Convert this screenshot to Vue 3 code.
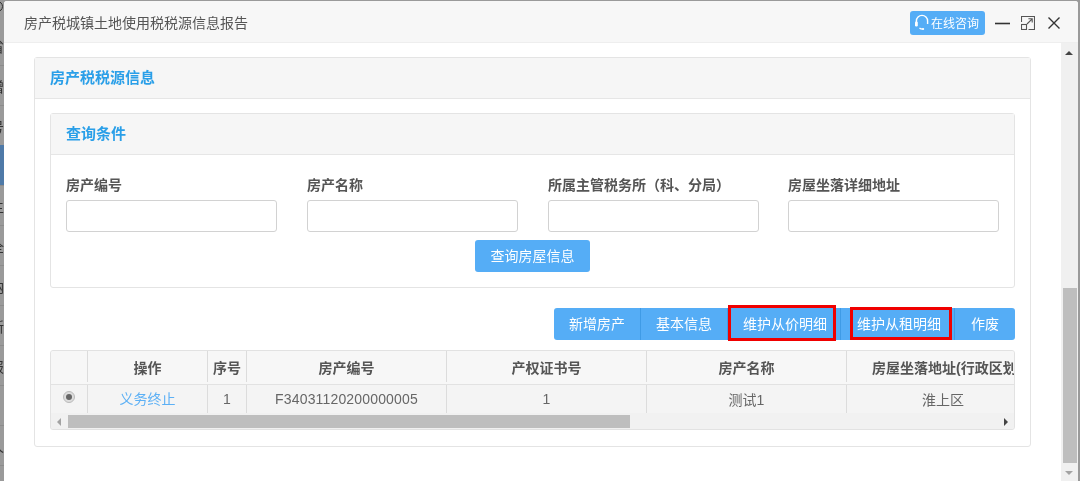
<script setup>
const sideRows = ['省', '增', '号', '', '主', '全', '纳', '新', '报', '', '人', '']
const fields = [
  { label: '房产编号' },
  { label: '房产名称' },
  { label: '所属主管税务所（科、分局）' },
  { label: '房屋坐落详细地址' },
]
const actions = [
  { text: '新增房产', cls: 'w86' },
  { text: '基本信息', cls: 'w86' },
  { text: '维护从价明细', cls: 'w113', mark: 'mark1' },
  { text: '维护从租明细', cls: 'w114', mark: 'mark2' },
  { text: '作废', cls: 'w60' },
]
const columns = [
  { head: '', cell: '', cls: 'c0' },
  { head: '操作', cell: '义务终止', cls: 'c1', link: true },
  { head: '序号', cell: '1', cls: 'c2' },
  { head: '房产编号', cell: 'F34031120200000005', cls: 'c3' },
  { head: '产权证书号', cell: '1', cls: 'c4' },
  { head: '房产名称', cell: '测试1', cls: 'c5' },
  { head: '房屋坐落地址(行政区划)', cell: '淮上区', cls: 'c6' },
]
</script>

<template>
  <div class="screen">
    <div class="backdrop">
      <i class="ring"></i>
      <div v-for="(c, i) in sideRows" :key="i" class="side-row">{{ c }}</div>
      <div class="blue-block"></div>
    </div>
    <div class="dialog">
      <header class="title-bar">
        <span class="title">房产税城镇土地使用税税源信息报告</span>
        <div class="title-tools">
          <button class="consult">
            <svg width="16" height="17" viewBox="0 0 16 17" fill="none" stroke="#fff" stroke-width="1.4">
              <path d="M2.4 9 V7 a5.6 5.6 0 0 1 11.2 0 V10" />
              <rect x="1" y="7.5" width="2.8" height="5" rx="1.2" fill="#fff" stroke="none" />
              <path d="M5.5 14 Q7 15.2 9 15" />
              <circle cx="9.2" cy="15" r="1" fill="#fff" stroke="none" />
            </svg>
            <span>在线咨询</span>
          </button>
          <svg class="tool min" width="15" height="14" viewBox="0 0 15 14" fill="none" stroke="#333" stroke-width="1.6">
            <path d="M0 7.5 H15" />
          </svg>
          <svg class="tool max" width="14" height="14" viewBox="0 0 14 14" fill="none" stroke="#555" stroke-width="1.1">
            <path d="M.5 6 V.5 H13.5 V13.5 H7.5" />
            <rect x=".5" y="8.5" width="5" height="5" />
            <path d="M6 8 L11.2 2.8 M7.4 2.8 H11.2 V6.6" />
          </svg>
          <svg class="tool close" width="12" height="12" viewBox="0 0 12 12" fill="none" stroke="#333" stroke-width="1.4">
            <path d="M.5 .5 L11.5 11.5 M11.5 .5 L.5 11.5" />
          </svg>
        </div>
      </header>

      <div class="body">
        <main class="content">
          <section class="panel outer">
            <div class="panel-head">房产税税源信息</div>
            <div class="outer-body">
              <section class="panel inner">
                <div class="panel-head">查询条件</div>
                <div class="inner-body">
                  <div class="fields">
                    <label v-for="f in fields" :key="f.label" class="field">
                      <span class="field-label">{{ f.label }}</span>
                      <input class="field-input" type="text" />
                    </label>
                  </div>
                  <div class="search-row">
                    <button class="btn search">查询房屋信息</button>
                  </div>
                </div>
              </section>

              <div class="actions">
                <div class="btn-group">
                  <button v-for="a in actions" :key="a.text" class="btn group-btn" :class="a.cls">
                    {{ a.text }}
                    <i v-if="a.mark" class="mark" :class="a.mark"></i>
                  </button>
                </div>
              </div>

              <div class="grid">
                <div class="grid-clip">
                  <div class="grid-row head">
                    <div v-for="c in columns" :key="c.cls" class="cell" :class="c.cls">{{ c.head }}</div>
                  </div>
                  <div class="grid-row data">
                    <div v-for="c in columns" :key="c.cls" class="cell" :class="[c.cls, { link: c.link }]">
                      <span v-if="c.cls === 'c0'" class="radio"><i></i></span>
                      <template v-else>{{ c.cell }}</template>
                    </div>
                  </div>
                </div>
                <div class="hscroll">
                  <span class="arrow-left"></span>
                  <div class="hthumb"></div>
                  <span class="arrow-right"></span>
                </div>
              </div>
            </div>
          </section>
        </main>

        <aside class="vscroll">
          <span class="arrow-up"></span>
          <div class="vthumb"></div>
          <span class="arrow-down"></span>
        </aside>
      </div>
    </div>
  </div>
</template>

<style>
html, body { margin: 0; padding: 0; overflow: hidden; background: #fff; }
</style>

<style scoped>
.screen {
  width: 1080px;
  height: 481px;
  display: flex;
  overflow: hidden;
  background: #9a9a9a;
  font-family: "Liberation Sans", "Noto Sans CJK SC", sans-serif;
  font-size: 14px;
  color: #555;
  position: relative;
  filter: blur(0.35px);
}
.backdrop {
  width: 4px;
  flex: none;
  position: relative;
  overflow: hidden;
  padding-top: 26px;
  box-sizing: border-box;
}
.ring {
  position: absolute;
  left: -8px;
  top: 1px;
  width: 9px;
  height: 9px;
  border: 1px solid #333;
  border-radius: 50%;
}
.side-row {
  width: 4px;
  height: 40px;
  box-sizing: border-box;
  border-bottom: 1px solid #8c8c8c;
  display: flex;
  justify-content: flex-end;
  align-items: center;
  font-size: 14px;
  color: #333;
  white-space: nowrap;
}
.blue-block {
  position: absolute;
  left: 0;
  top: 145px;
  width: 4px;
  height: 40px;
  background: #4f7aa8;
}
.dialog {
  flex: 1;
  margin: 1px 2px 0 0;
  display: flex;
  flex-direction: column;
  background: #fff;
  border-radius: 3px 3px 0 0;
  min-width: 0;
}
.title-bar {
  height: 42px;
  flex: none;
  box-sizing: border-box;
  background: #f7f7f7;
  border-bottom: 1px solid #eee;
  border-radius: 3px 3px 0 0;
  display: flex;
  align-items: center;
  justify-content: space-between;
  padding: 0 18px 0 20px;
}
.title {
  color: #555;
  font-size: 14px;
}
.title-tools {
  display: flex;
  align-items: center;
  padding-top: 2px;
}
.consult {
  height: 24px;
  width: 75px;
  border: 0;
  border-radius: 3px;
  background: #55adf6;
  color: #fff;
  display: flex;
  align-items: center;
  gap: 1px;
  padding: 0 0 0 4px;
  font: inherit;
  font-size: 12px;
}
.tool { display: block; flex: none; }
.min { margin-left: 10px; }
.max { margin-left: 11px; }
.close { margin-left: 13px; }
.body {
  flex: 1;
  display: flex;
  min-height: 0;
}
.content {
  flex: 1;
  padding: 14px 30px 0 30px;
  min-width: 0;
}
.panel {
  border: 1px solid #e4e4e4;
  border-radius: 3px;
  box-sizing: border-box;
  background: #fff;
}
.outer { height: 390px; }
.panel-head {
  height: 41px;
  box-sizing: border-box;
  background: #f6f6f6;
  border-bottom: 1px solid #e6e6e6;
  color: #2a9fe8;
  font-size: 15px;
  font-weight: 700;
  display: flex;
  align-items: center;
  padding: 0 0 3px 15px;
}
.outer-body { padding: 14px 15px 0; }
.inner { height: 175px; }
.inner-body { padding: 20px 14px 0 15px; }
.fields {
  display: flex;
  gap: 30px;
}
.field {
  width: 211px;
  display: flex;
  flex-direction: column;
}
.field:last-child { margin-left: -1px; }
.field-label {
  font-weight: 700;
  color: #555;
  line-height: 20px;
  margin-bottom: 5px;
  white-space: nowrap;
}
.field-input {
  height: 32px;
  box-sizing: border-box;
  border: 1px solid #d2d2d2;
  border-radius: 3px;
  background: #fff;
  padding: 0;
}
.search-row {
  display: flex;
  justify-content: center;
  margin-top: 8px;
  padding-right: 1px;
}
.btn {
  border: 0;
  background: #55adf6;
  color: #fff;
  font: inherit;
  font-size: 14px;
  height: 32px;
  padding: 0;
}
.search {
  width: 115px;
  border-radius: 3px;
  padding-bottom: 3px;
}
.actions {
  display: flex;
  justify-content: flex-end;
  margin-top: 20px;
}
.btn-group {
  display: flex;
  border-radius: 3px;
}
.group-btn {
  position: relative;
  box-sizing: border-box;
  border-right: 1px solid #3f9be6;
  white-space: nowrap;
  padding-bottom: 2px;
}
.group-btn:first-child { border-radius: 3px 0 0 3px; }
.group-btn:last-child { border-radius: 0 3px 3px 0; border-right: 0; }
.w86 { width: 87px; }
.w113 { width: 113px; text-align: left; padding-left: 15px; }
.w114 { width: 114px; text-align: left; padding-left: 16px; }
.w60 { width: 60px; }
.mark {
  position: absolute;
  border: 3px solid #f00000;
  box-sizing: border-box;
}
.mark1 { left: 0; top: -3px; width: 108px; height: 36px; }
.mark2 { left: 9px; top: -1px; width: 102px; height: 33px; }
.grid {
  margin-top: 10px;
  height: 80px;
  box-sizing: border-box;
  border: 1px solid #e2e2e2;
  border-radius: 3px;
  background: #f5f5f5;
  overflow: hidden;
}
.grid-clip { overflow: hidden; height: 62px; }
.grid-row {
  display: flex;
  width: 1180px;
  box-sizing: border-box;
}
.head {
  height: 34px;
  background: #f7f7f7;
  border-bottom: 1px solid #e2e2e2;
  font-weight: 700;
  color: #555;
  padding-bottom: 2px;
}
.data { height: 28px; background: #f4f4f4; color: #666; }
.cell {
  flex: none;
  box-sizing: border-box;
  border-right: 1px solid #dcdcdc;
  display: flex;
  align-items: center;
  justify-content: center;
  white-space: nowrap;
}
.data .cell { padding-bottom: 1px; }
.data .c3 { letter-spacing: 0.16px; }
.data .c1 { padding-bottom: 3px; }
.c0 { width: 37px; }
.c1 { width: 120px; }
.c2 { width: 39px; }
.c3 { width: 200px; }
.c4 { width: 200px; }
.c5 { width: 200px; }
.c6 { width: 340px; justify-content: flex-start; padding-left: 25px; }
.data .c6 { padding-left: 75px; }
.link { color: #5cb0f5; }
.radio {
  width: 12px;
  height: 12px;
  border-radius: 50%;
  background: #ddd;
  border: 1px solid #bbb;
  box-sizing: border-box;
  display: flex;
  align-items: center;
  justify-content: center;
  margin-top: -3px;
}
.radio i {
  width: 6px;
  height: 6px;
  border-radius: 50%;
  background: #666;
}
.hscroll {
  height: 17px;
  background: #f1f1f1;
  display: flex;
  align-items: center;
  position: relative;
}
.arrow-left {
  width: 0;
  height: 0;
  margin-left: 6px;
  border-style: solid;
  border-width: 4px 4px 4px 0;
  border-color: transparent #a3a3a3 transparent transparent;
}
.hthumb {
  width: 562px;
  height: 13px;
  margin-left: 7px;
  background: #bebebe;
}
.arrow-right {
  width: 0;
  height: 0;
  margin-left: auto;
  margin-right: 6px;
  border-style: solid;
  border-width: 4px 0 4px 4px;
  border-color: transparent transparent transparent #444;
}
.vscroll {
  width: 17px;
  flex: none;
  background: #f0f0f0;
  position: relative;
}
.arrow-up {
  position: absolute;
  top: 8px;
  left: 4px;
  width: 0;
  height: 0;
  border-style: solid;
  border-width: 0 4px 4px;
  border-color: transparent transparent #444;
}
.vthumb {
  position: absolute;
  left: 2px;
  top: 245px;
  width: 14px;
  height: 175px;
  background: #bebebe;
}
.arrow-down {
  position: absolute;
  bottom: 6px;
  left: 4px;
  width: 0;
  height: 0;
  border-style: solid;
  border-width: 4px 4px 0;
  border-color: #a3a3a3 transparent transparent;
}
</style>
